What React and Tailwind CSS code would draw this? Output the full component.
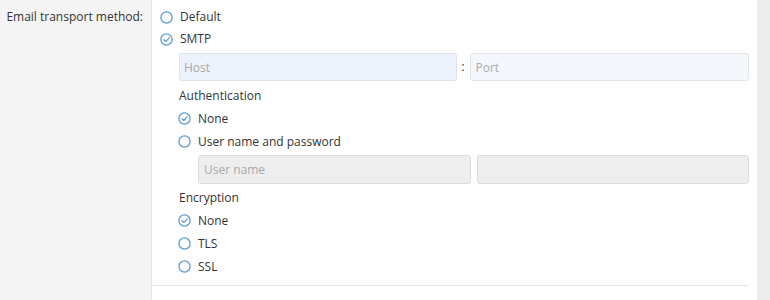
import React, { useState } from 'react';

const Radio = ({ checked, label, onClick, tall = true }) => (
  <button
    type="button"
    onClick={onClick}
    className={`flex items-center gap-[7px] text-[#333] text-left ${tall ? 'h-[23px]' : 'h-[22px]'}`}
  >
    <svg width="13" height="13" viewBox="0 0 13 13" className="shrink-0">
      <circle cx="6.5" cy="6.5" r="5.6" fill="none" stroke="#5b9bd5" strokeWidth="1.3" />
      {checked && (
        <path d="M3.9 6.7 L5.8 8.5 L9.2 4.8" fill="none" stroke="#5b9bd5" strokeWidth="1.2" strokeLinecap="round" strokeLinejoin="round" />
      )}
    </svg>
    <span>{label}</span>
  </button>
);

const App = () => {
  const [transport, setTransport] = useState('smtp');
  const [auth, setAuth] = useState('none');
  const [enc, setEnc] = useState('none');

  return (
    <div className="w-[770px] h-[300px] flex bg-[#ececec] text-[12px] overflow-hidden" style={{ fontFamily: '"Open Sans", "Noto Sans", sans-serif' }}>
      <div className="w-[152px] shrink-0 bg-[#f5f5f5] border-r border-[#e6e6e6] flex justify-end pr-[8px] pt-[6px] text-[#333]">
        <span className="leading-[22px] whitespace-nowrap">Email transport method:</span>
      </div>
      <div className="w-[605px] shrink-0 bg-white pl-[8px] pt-[6px] flex flex-col">
        <Radio tall={false} label="Default" checked={transport === 'default'} onClick={() => setTransport('default')} />
        <Radio tall={false} label="SMTP" checked={transport === 'smtp'} onClick={() => setTransport('smtp')} />
        <div className="pl-[18px] pr-[8px] flex flex-col">
          <div className="flex items-center mt-[3px] h-[28px] pl-[1px]">
            <input
              autoFocus
              placeholder="Host"
              className="flex-1 min-w-0 h-full rounded-[3px] border border-[#dde3ea] bg-[#edf3fb] px-[4px] text-[12px] text-[#333] placeholder-[#a9a9a9] outline-none caret-[#333]"
            />
            <span className="w-[13px] text-center text-[#333]">:</span>
            <input
              placeholder="Port"
              className="flex-1 min-w-0 h-full rounded-[3px] border border-[#e2e6ea] bg-[#f4f8fc] px-[5px] text-[12px] text-[#333] placeholder-[#a9a9a9] outline-none"
            />
          </div>
          <div className="mt-[3px] leading-[23px] text-[#333] pl-[1px]">Authentication</div>
          <Radio label="None" checked={auth === 'none'} onClick={() => setAuth('none')} />
          <Radio label="User name and password" checked={auth === 'user'} onClick={() => setAuth('user')} />
          <div className="pl-[20px] flex gap-[6px] h-[29px] mt-[2px]">
            <input
              disabled
              placeholder="User name"
              className="flex-1 min-w-0 h-full rounded-[3px] border border-[#dcdcdc] bg-[#eeeeee] px-[5px] text-[12px] placeholder-[#a9a9a9] outline-none"
            />
            <input
              disabled
              type="password"
              className="flex-1 min-w-0 h-full rounded-[3px] border border-[#dcdcdc] bg-[#eeeeee] px-[5px] text-[12px] outline-none"
            />
          </div>
          <div className="mt-[2px] leading-[23px] text-[#333] pl-[1px]">Encryption</div>
          <Radio label="None" checked={enc === 'none'} onClick={() => setEnc('none')} />
          <Radio label="TLS" checked={enc === 'tls'} onClick={() => setEnc('tls')} />
          <Radio label="SSL" checked={enc === 'ssl'} onClick={() => setEnc('ssl')} />
        </div>
        <div className="mt-[7px] mr-[8px] -ml-[8px] border-t border-[#e6e6e6]" />
      </div>
    </div>
  );
};

export default App;
